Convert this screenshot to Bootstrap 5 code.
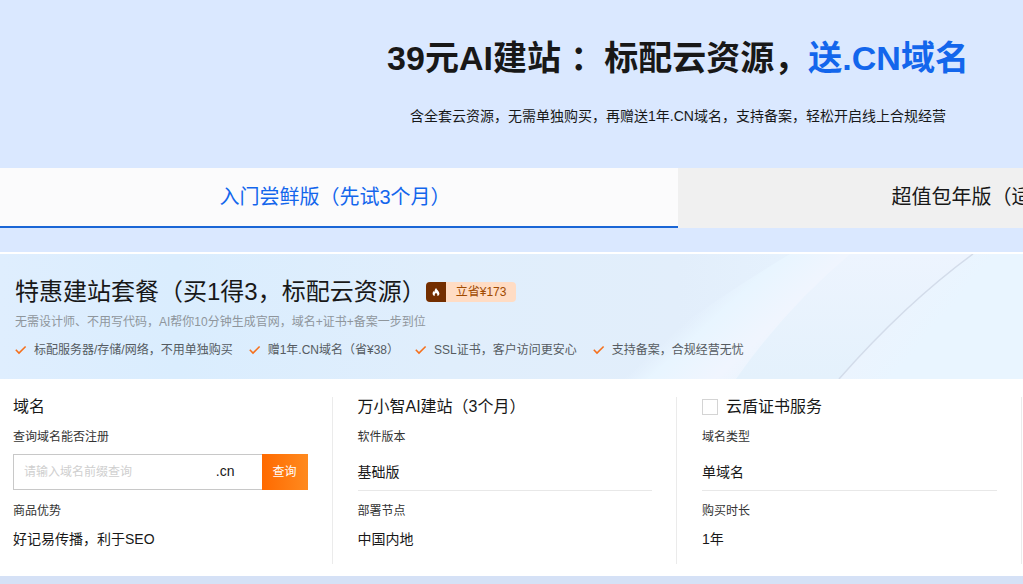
<!DOCTYPE html>
<html lang="zh-CN">
<head>
<meta charset="utf-8">
<meta name="viewport" content="width=device-width, initial-scale=1">
<title>39元AI建站</title>
<link href="https://cdn.jsdelivr.net/npm/bootstrap@5.3.0/dist/css/bootstrap.min.css" rel="stylesheet">
<style>
  body {
    font-family: "Liberation Sans", "Noto Sans CJK SC", sans-serif;
    font-size: 14px;
    line-height: 20px;
    color: #181818;
    background: #d5e1f6;
    overflow-x: hidden;
  }
  /* desktop layout: never narrower than four product columns */
  .promo { min-width: 1356px; background: #dae8ff; }
  .hero { padding: 32px 0 42px; }
  .hero h1 { font-size: 34px; line-height: 52px; font-weight: 700; margin-bottom: 22px; }
  .hero h1 span { color: #1366ec; }
  .plan-tabs .nav-link {
    height: 60px;
    font-size: 20px;
    line-height: 58px;
    padding: 0;
    color: #181818;
    background: #f0f0f0;
    border: 0;
    border-bottom: 2px solid #f0f0f0;
    border-radius: 0;
  }
  .plan-tabs .nav-link.active { color: #1366ec; background: #fbfbfc; border-bottom-color: #1a66d6; padding-right: 8px; }
  .plan-head { border-top: 2px solid #fff; padding: 24px 15px 19px; background: #e0effd; }
  .plan-art { z-index: 0; }
  .plan-copy { z-index: 1; }
  .plan-copy h2 { font-size: 24px; line-height: 28px; font-weight: 400; }
  .plan-copy p { font-size: 12px; color: #8f969c; margin: 6px 0 8px; }
  .perks { font-size: 12px; color: #555b61; gap: 16px; }
  .perks svg { width: 12px; height: 12px; margin-right: 7px; }
  .save-tag { font-size: 12px; color: #a04a00; background: #ffdcc4; border-radius: 4px; }
  .save-tag .flame { width: 20px; height: 20px; background: #732e00; }
  .save-tag .amount { padding: 0 10px; }
  .goods { padding: 18px 0 12px; }
  .goods-row { margin: 0 -10px 0 -12px; }
  .goods-item { padding: 0 24px 14px 25px; border-right: 1px solid #ebebeb; }
  .goods-item h3 { font-size: 16px; line-height: 20px; font-weight: 400; margin-bottom: 11px; }
  .field-name { display: block; font-size: 12px; line-height: 18px; color: #333; margin-bottom: 8px; }
  .field-box { height: 37px; margin-bottom: 11px; }
  .field-box.ruled { border-bottom: 1px solid #e8e8e8; }
  .field-value { line-height: 22px; }
  .search { height: 36px; }
  .search .search-text { border: 1px solid #c8c8c8; border-right: 0; }
  .search input { font-size: 12px; padding: 0 10px; color: #181818; }
  .search input::placeholder { color: #cfcfcf; opacity: 1; }
  .search .suffix { padding: 0 27px 2px 0; }
  .search button { width: 46px; font-size: 12px; padding: 0; color: #fff; border: 0; border-radius: 0; background: linear-gradient(90deg, #ff6a00, #ff8a1f); }
  .form-check-input.pick { width: 16px; height: 16px; margin: 0 8px 0 0; border-radius: 0; border-color: #d4d4d4; }
</style>
</head>
<body>
<main class="promo">
  <header class="hero text-center">
    <h1>39元AI建站 ：标配云资源，<span>送.CN域名</span></h1>
    <p class="mb-0">含全套云资源，无需单独购买，再赠送1年.CN域名，支持备案，轻松开启线上合规经营</p>
  </header>

  <nav class="plan-tabs nav mb-4">
    <button type="button" class="nav-link w-50 active">入门尝鲜版（先试3个月）</button>
    <button type="button" class="nav-link w-50">超值包年版（适合1年经营）</button>
  </nav>

  <section class="bg-white">
    <div class="plan-head position-relative overflow-hidden">
      <svg class="plan-art position-absolute top-0 start-0 w-100 h-100" viewBox="0 0 1356 125" preserveAspectRatio="none" aria-hidden="true">
        <defs>
          <linearGradient id="base" x1="0" x2="1" y1="0" y2="0">
            <stop offset="0" stop-color="#dfeefe"/>
            <stop offset=".13" stop-color="#daedfe"/>
            <stop offset=".33" stop-color="#e0eefc"/>
            <stop offset=".5" stop-color="#e2eefb"/>
            <stop offset=".62" stop-color="#e7f3fe"/>
            <stop offset="1" stop-color="#e9f4ff"/>
          </linearGradient>
          <linearGradient id="beam" gradientUnits="userSpaceOnUse" x1="715" y1="40" x2="775" y2="105">
            <stop offset="0" stop-color="#e8f4ff" stop-opacity="0"/>
            <stop offset=".2" stop-color="#e8f5ff"/>
            <stop offset=".7" stop-color="#f0f5fe"/>
            <stop offset="1" stop-color="#eaf4fd"/>
          </linearGradient>
          <linearGradient id="edge" gradientUnits="userSpaceOnUse" x1="895" y1="60" x2="925" y2="85">
            <stop offset="0" stop-color="#ebf4fe"/>
            <stop offset="1" stop-color="#e9f5ff"/>
          </linearGradient>
          <linearGradient id="glass" x1="0" x2="0" y1="0" y2="1">
            <stop offset="0" stop-color="#edf4fe"/>
            <stop offset="1" stop-color="#e4f1fc"/>
          </linearGradient>
        </defs>
        <path fill="url(#base)" d="M0 0h1356v125H0z"/>
        <path fill="url(#beam)" d="M790 0h75Q790 62 738 125H610Q690 60 790 0z"/>
        <path fill="url(#glass)" d="M850 0h123Q905 50 839 125H736Q785 55 850 0z"/>
        <path fill="url(#edge)" d="M973 0h383v125H839Q905 50 973 0z"/>
        <path fill="none" stroke="#d3dcea" stroke-width="1.5" d="M973 0Q905 50 839 125"/>
      </svg>
      <div class="plan-copy position-relative">
        <div class="d-flex align-items-center">
          <h2 class="mb-0">特惠建站套餐（买1得3，标配云资源）</h2>
          <span class="save-tag d-inline-flex align-items-center overflow-hidden">
            <span class="flame d-flex align-items-center justify-content-center">
              <svg width="8" height="8" viewBox="0 0 8 8" aria-hidden="true"><path fill="#fff" d="M4.1 0C4.5 1.5 7.4 3.2 7.4 5.6 7.4 7 6.5 7.8 5.3 8 5.8 6.8 5 5.5 4 4.7 3.1 5.5 2.2 6.8 2.8 8 1.5 7.8.6 7 .6 5.5.6 4.4 1.2 3.7 1.8 3 2 3.5 2.2 3.7 2.5 3.9 2.5 2.3 3.1.9 4.1 0z"/></svg>
            </span>
            <span class="amount">立省¥173</span>
          </span>
        </div>
        <p>无需设计师、不用写代码，AI帮你10分钟生成官网，域名+证书+备案一步到位</p>
        <ul class="perks list-unstyled d-flex mb-0">
          <li class="d-flex align-items-center"><svg viewBox="0 0 12 12" aria-hidden="true"><path d="M.8 5.8 4 9 10.6 2.5" fill="none" stroke="#f5701c" stroke-width="1.6"/></svg>标配服务器/存储/网络，不用单独购买</li>
          <li class="d-flex align-items-center"><svg viewBox="0 0 12 12" aria-hidden="true"><path d="M.8 5.8 4 9 10.6 2.5" fill="none" stroke="#f5701c" stroke-width="1.6"/></svg>赠1年.CN域名（省¥38）</li>
          <li class="d-flex align-items-center"><svg viewBox="0 0 12 12" aria-hidden="true"><path d="M.8 5.8 4 9 10.6 2.5" fill="none" stroke="#f5701c" stroke-width="1.6"/></svg>SSL证书，客户访问更安心</li>
          <li class="d-flex align-items-center"><svg viewBox="0 0 12 12" aria-hidden="true"><path d="M.8 5.8 4 9 10.6 2.5" fill="none" stroke="#f5701c" stroke-width="1.6"/></svg>支持备案，合规经营无忧</li>
        </ul>
      </div>
    </div>

    <div class="goods">
      <div class="goods-row d-flex">
        <article class="goods-item col-3">
          <h3>域名</h3>
          <label class="field-name" for="domain">查询域名能否注册</label>
          <div class="field-box">
            <form class="search d-flex">
              <div class="search-text d-flex align-items-center flex-fill">
                <input id="domain" type="text" class="flex-fill w-50 border-0 bg-transparent" placeholder="请输入域名前缀查询">
                <span class="suffix">.cn</span>
              </div>
              <button type="button" class="btn">查询</button>
            </form>
          </div>
          <span class="field-name">商品优势</span>
          <div class="field-value">好记易传播，利于SEO</div>
        </article>
        <article class="goods-item col-3">
          <h3>万小智AI建站（3个月）</h3>
          <span class="field-name">软件版本</span>
          <div class="field-box ruled d-flex align-items-center">基础版</div>
          <span class="field-name">部署节点</span>
          <div class="field-value">中国内地</div>
        </article>
        <article class="goods-item col-3">
          <h3 class="d-flex align-items-center">
            <input id="cert" type="checkbox" class="form-check-input pick">
            <label for="cert">云盾证书服务</label>
          </h3>
          <span class="field-name">域名类型</span>
          <div class="field-box ruled d-flex align-items-center">单域名</div>
          <span class="field-name">购买时长</span>
          <div class="field-value">1年</div>
        </article>
        <div class="col-3"></div>
      </div>
    </div>
  </section>
</main>
<script src="https://cdn.jsdelivr.net/npm/bootstrap@5.3.0/dist/js/bootstrap.bundle.min.js"></script>
</body>
</html>
